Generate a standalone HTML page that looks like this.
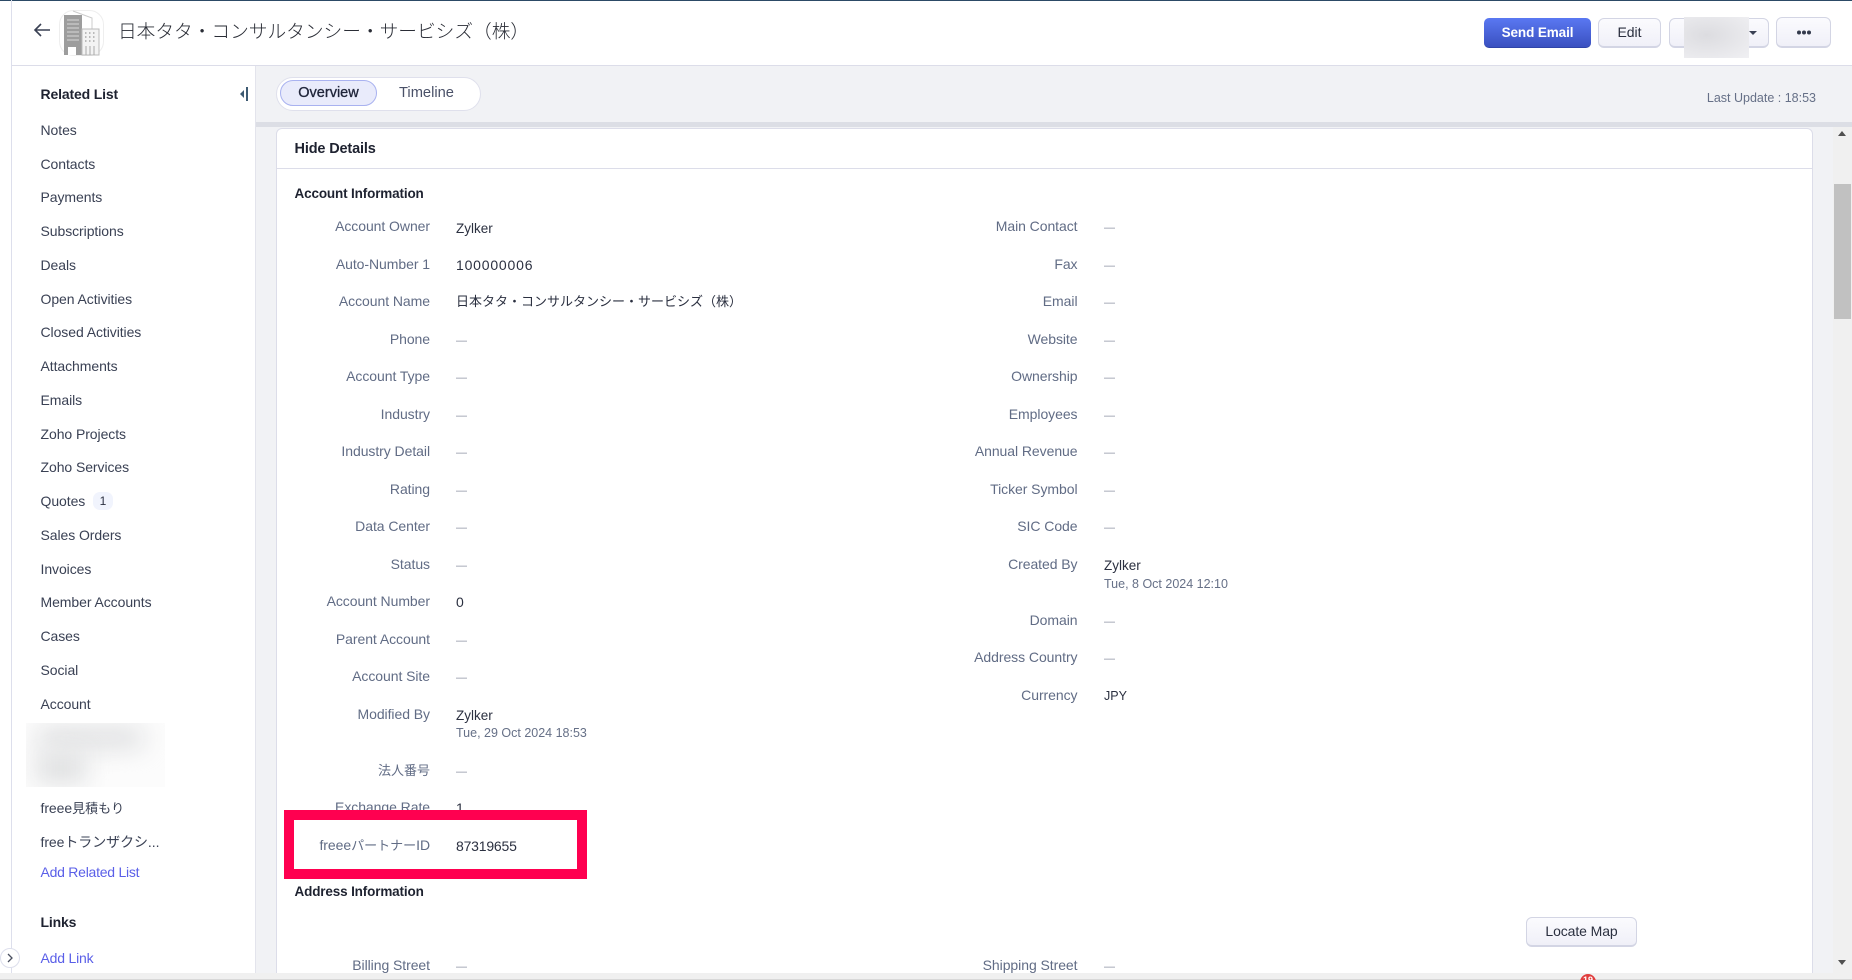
<!DOCTYPE html>
<html lang="ja"><head><meta charset="utf-8"><title>Account</title>
<style>
html,body{margin:0;padding:0;width:1852px;height:980px;overflow:hidden;background:#fff}
body{position:relative;font-family:"Liberation Sans","Noto Sans CJK JP",sans-serif;font-size:14px;color:#2b3040}
div,span,a{box-sizing:border-box}
.a{position:absolute}
.t{position:absolute;white-space:nowrap;line-height:20px}
.s{left:40.5px;color:#3a4154;letter-spacing:-.07px}
.h{font-weight:700;color:#1e2230;letter-spacing:-.15px}
.l{left:0;width:430px;text-align:right;color:#616c85;letter-spacing:-.06px}
.r{left:0;width:1077.5px;text-align:right;color:#616c85;letter-spacing:-.06px}
.v{left:456px;color:#2b3040}
.w{left:1104px;color:#2b3040}
.d{color:#8c93a3;font-size:11px;transform:translateY(1px)}
.m{color:#667087;font-size:12.5px}
.z{font-size:13.5px;transform:translateY(1px)}
.c{font-size:13px;letter-spacing:0}
.b{position:absolute;border:1px solid #d3d5e4;border-bottom-width:2px;border-radius:6px;background:linear-gradient(#fbfbfe,#f0f0f8);text-align:center;color:#2b3040;font-size:14px}
</style></head><body>
<div class="a" style="left:0;top:0;width:1852px;height:1px;background:#2c4a66"></div>
<div class="a" style="left:11px;top:0;width:1px;height:973px;background:#dddfec"></div>
<div class="a" style="left:12px;top:65px;width:1840px;height:1px;background:#dcdde9"></div>
<div class="a" style="left:255px;top:66px;width:1597px;height:907px;background:#f1f2f5"></div>
<div class="a" style="left:255px;top:122px;width:1597px;height:5px;background:#dcdee5"></div>
<div class="a" style="left:255px;top:66px;width:1px;height:907px;background:#e3e4ec"></div>

<svg class="a" style="left:32px;top:22px" width="20" height="16" viewBox="0 0 20 16"><path d="M18 8H3M9 2 3 8l6 6" fill="none" stroke="#3a4154" stroke-width="1.6"/></svg>
<svg class="a" style="left:59px;top:10px" width="45" height="46" viewBox="0 0 45 46">
<rect x=".5" y=".5" width="44" height="45" rx="14" fill="#fff" stroke="#eeeeee"/>
<path d="M14 1 33 8 33 19" fill="none" stroke="#ccc"/>
<rect x="5" y="5" width="18" height="40" fill="#9d9d9d"/>
<path d="M8 10h12M8 14h12M8 18h12M8 22h12M8 26h12M8 30h12" stroke="#d8d8d8" stroke-width="1"/>
<rect x="9" y="37" width="8" height="8" fill="#fff"/>
<rect x="23" y="19" width="17" height="26" fill="#f3f3f3" stroke="#bbb"/>
<path d="M26 23h12M26 27h12M26 31h12" stroke="#999" stroke-width="1.2" stroke-dasharray="1.5 2.5"/>
<path d="M27 36v9M31 36v9M35 36v9" stroke="#aaa"/>
</svg>
<div class="t" style="left:118px;top:18px;font-size:18.7px;line-height:26px;color:#2a2d36;font-family:'Noto Sans CJK JP',sans-serif;font-weight:300">日本タタ・コンサルタンシー・サービシズ（株）</div>

<div class="a" style="left:1484px;top:18px;width:107px;height:30px;border-radius:5px;background:linear-gradient(#5a78f2,#3a50c0);border-bottom:1px solid #2f44a8;color:#fff;font-weight:700;font-size:13.5px;letter-spacing:-.1px;line-height:29px;text-align:center">Send Email</div>
<div class="b" style="left:1598px;top:18px;width:63px;height:30px;line-height:27px">Edit</div>
<div class="b" style="left:1669px;top:18px;width:100px;height:30px"></div>
<div class="a" style="left:1684px;top:17px;width:65px;height:41px;background:radial-gradient(ellipse at 35% 45%,#dcdce0,#f0f0f3)"></div>
<div class="a" style="left:1749px;top:31px;width:0;height:0;border:4px solid transparent;border-top:4px solid #3a4154"></div>
<div class="b" style="left:1776px;top:17px;width:55px;height:31px"></div>
<svg class="a" style="left:1796px;top:29px" width="16" height="7"><circle cx="3" cy="3.5" r="2" fill="#333a4c"/><circle cx="8" cy="3.5" r="2" fill="#333a4c"/><circle cx="13" cy="3.5" r="2" fill="#333a4c"/></svg>

<div class="t h" style="left:40.5px;top:84px;font-size:14px">Related List</div>
<div class="a" style="left:240px;top:90px;width:0;height:0;border:4px solid transparent;border-right:4px solid #3e5a72;border-left:0"></div>
<div class="a" style="left:246px;top:87px;width:2px;height:14px;background:#3e5a72"></div>

<div class="t s" style="top:120px">Notes</div>
<div class="t s" style="top:154px">Contacts</div>
<div class="t s" style="top:187px">Payments</div>
<div class="t s" style="top:221px">Subscriptions</div>
<div class="t s" style="top:255px">Deals</div>
<div class="t s" style="top:289px">Open Activities</div>
<div class="t s" style="top:322px">Closed Activities</div>
<div class="t s" style="top:356px">Attachments</div>
<div class="t s" style="top:390px">Emails</div>
<div class="t s" style="top:424px">Zoho Projects</div>
<div class="t s" style="top:457px">Zoho Services</div>
<div class="t s" style="top:491px">Quotes</div>
<div class="a" style="left:93px;top:492px;width:20px;height:18px;border-radius:7px;background:#f1f4fd;text-align:center;font-size:12px;line-height:18px;color:#2b3040">1</div>
<div class="t s" style="top:525px">Sales Orders</div>
<div class="t s" style="top:559px">Invoices</div>
<div class="t s" style="top:592px">Member Accounts</div>
<div class="t s" style="top:626px">Cases</div>
<div class="t s" style="top:660px">Social</div>
<div class="t s" style="top:694px">Account</div>
<div class="a" style="left:26px;top:723px;width:139px;height:64px;overflow:hidden;background:#fcfcfc"><div class="a" style="left:12px;top:6px;width:105px;height:18px;background:#d8d9db;filter:blur(13px)"></div><div class="a" style="left:10px;top:30px;width:50px;height:30px;background:#dfe0e1;filter:blur(12px)"></div></div>
<div class="t s" style="top:798px">freee<span class="c">見積もり</span></div>
<div class="t s" style="top:832px">freeトランザクシ...</div>
<div class="t" style="left:40.5px;top:862px;color:#5a5fe8;letter-spacing:-.25px">Add Related List</div>
<div class="t h" style="left:40.5px;top:912px;font-size:14px">Links</div>
<div class="t" style="left:40.5px;top:948px;color:#5a5fe8;letter-spacing:-.2px">Add Link</div>
<div class="a" style="left:0;top:948px;width:20px;height:20px;border-radius:50%;background:#fff;border:1px solid #dddfec"></div>
<svg class="a" style="left:6px;top:953px" width="8" height="10"><path d="M2 1l4 4-4 4" fill="none" stroke="#4a5060" stroke-width="1.3"/></svg>

<div class="a" style="left:276px;top:77px;width:205px;height:34px;border-radius:17px;background:#fff;border:1px solid #dfe0ec"></div>
<div class="a" style="left:280px;top:80px;width:97px;height:26px;border-radius:13px;background:#e9ebfb;border:1px solid #a9b2f0;text-align:center;line-height:24px;font-size:14.5px;color:#20253a;-webkit-text-stroke:.3px #20253a">Overview</div>
<div class="t" style="left:399px;top:83px;color:#4a5168;font-size:14.7px">Timeline</div>
<div class="t m" style="right:36px;top:88px">Last Update : 18:53</div>

<div class="a" style="left:276px;top:128px;width:1537px;height:860px;background:#fff;border:1px solid #dcdde9;border-radius:6px"></div>
<div class="a" style="left:277px;top:168px;width:1535px;height:1px;background:#dcdde9"></div>
<div class="t h" style="left:294.5px;top:139px;font-size:14.5px">Hide Details</div>
<div class="t h" style="left:294.5px;top:184px;font-size:13.5px">Account Information</div>

<div class="t l" style="top:216px">Account Owner</div><div class="t v z" style="top:218px">Zylker</div>
<div class="t l" style="top:254px">Auto-Number 1</div><div class="t v" style="top:255px;letter-spacing:.8px">100000006</div>
<div class="t l" style="top:291px">Account Name</div><div class="t v" style="top:292px;font-size:13px">日本タタ・コンサルタンシー・サービシズ（株）</div>
<div class="t l" style="top:329px">Phone</div><div class="t v d" style="top:330px">—</div>
<div class="t l" style="top:366px">Account Type</div><div class="t v d" style="top:367px">—</div>
<div class="t l" style="top:404px">Industry</div><div class="t v d" style="top:405px">—</div>
<div class="t l" style="top:441px">Industry Detail</div><div class="t v d" style="top:442px">—</div>
<div class="t l" style="top:479px">Rating</div><div class="t v d" style="top:480px">—</div>
<div class="t l" style="top:516px">Data Center</div><div class="t v d" style="top:517px">—</div>
<div class="t l" style="top:554px">Status</div><div class="t v d" style="top:555px">—</div>
<div class="t l" style="top:591px">Account Number</div><div class="t v" style="top:592px">0</div>
<div class="t l" style="top:629px">Parent Account</div><div class="t v d" style="top:630px">—</div>
<div class="t l" style="top:666px">Account Site</div><div class="t v d" style="top:667px">—</div>
<div class="t l" style="top:704px">Modified By</div><div class="t v z" style="top:705px">Zylker</div><div class="t v m" style="top:723px">Tue, 29 Oct 2024 18:53</div>
<div class="t l" style="top:760px"><span class="c">法人番号</span></div><div class="t v d" style="top:761px">—</div>
<div class="t l" style="top:797px">Exchange Rate</div><div class="t v" style="top:798px">1</div>
<div class="t l" style="top:835px">freee<span class="c">パートナー</span>ID</div><div class="t v" style="top:836px;letter-spacing:-.2px">87319655</div>
<div class="a" style="left:284px;top:810px;width:303px;height:69px;border:10px solid #ff0050"></div>

<div class="t r" style="top:216px">Main Contact</div><div class="t w d" style="top:217px">—</div>
<div class="t r" style="top:254px">Fax</div><div class="t w d" style="top:255px">—</div>
<div class="t r" style="top:291px">Email</div><div class="t w d" style="top:292px">—</div>
<div class="t r" style="top:329px">Website</div><div class="t w d" style="top:330px">—</div>
<div class="t r" style="top:366px">Ownership</div><div class="t w d" style="top:367px">—</div>
<div class="t r" style="top:404px">Employees</div><div class="t w d" style="top:405px">—</div>
<div class="t r" style="top:441px">Annual Revenue</div><div class="t w d" style="top:442px">—</div>
<div class="t r" style="top:479px">Ticker Symbol</div><div class="t w d" style="top:480px">—</div>
<div class="t r" style="top:516px">SIC Code</div><div class="t w d" style="top:517px">—</div>
<div class="t r" style="top:554px">Created By</div><div class="t w z" style="top:555px">Zylker</div><div class="t w m" style="top:574px">Tue, 8 Oct 2024 12:10</div>
<div class="t r" style="top:610px">Domain</div><div class="t w d" style="top:611px">—</div>
<div class="t r" style="top:647px">Address Country</div><div class="t w d" style="top:648px">—</div>
<div class="t r" style="top:685px">Currency</div><div class="t w" style="top:686px;font-size:12.5px">JPY</div>

<div class="t h" style="left:294.5px;top:882px;font-size:13.5px">Address Information</div>
<div class="b" style="left:1526px;top:917px;width:111px;height:30px;line-height:27px;letter-spacing:-.1px">Locate Map</div>
<div class="t l" style="top:955px">Billing Street</div><div class="t v d" style="top:956px">—</div>
<div class="t r" style="top:955px">Shipping Street</div><div class="t w d" style="top:956px">—</div>

<div class="a" style="left:1833px;top:127px;width:19px;height:846px;background:#f0f0f0"></div>
<div class="a" style="left:1834px;top:184px;width:17px;height:135px;background:#c1c1c1"></div>
<div class="a" style="left:1838px;top:131px;width:0;height:0;border:4.5px solid transparent;border-bottom:5px solid #505050;border-top:0"></div>
<div class="a" style="left:1838px;top:960px;width:0;height:0;border:4.5px solid transparent;border-top:5px solid #505050;border-bottom:0"></div>

<div class="a" style="left:0;top:973px;width:1852px;height:7px;background:#f0f0f0;overflow:hidden"><div class="a" style="left:0;top:6px;width:1852px;height:1px;background:#d8d8d8"></div><div class="a" style="left:1580px;top:1px;width:16px;height:16px;border-radius:50%;background:#e03e3e;color:#fff;font-size:9px;font-weight:700;line-height:12px;text-align:center">19</div></div>
</body></html>
